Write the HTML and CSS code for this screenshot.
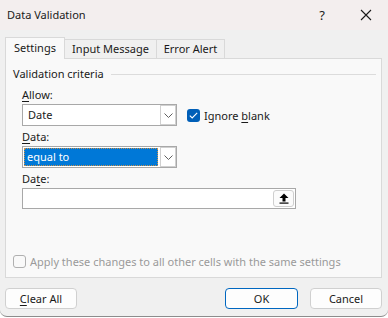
FILE: index.html
```html
<!DOCTYPE html>
<html>
<head>
<meta charset="utf-8">
<link rel="stylesheet" href="styles.css">
</head>
<body>
<div class="window">
  <div class="titlebar">
    <span class="title">Data Validation</span>
    <span class="help">?</span>
    <span class="close"><svg width="12" height="12" viewBox="0 0 12 12"><path d="M1 1L11 11M11 1L1 11" stroke="#1a1a1a" stroke-width="1.1" fill="none"/></svg></span>
  </div>
  <div class="content">
    <div class="tabs">
      <div class="tab active">Settings</div>
      <div class="tab">Input Message</div>
      <div class="tab">Error Alert</div>
    </div>
    <div class="panel">
      <div class="group-head"><span>Validation criteria</span><div class="rule"></div></div>
      <div class="fields">
        <div class="label"><u>A</u>llow:</div>
        <div class="row">
          <div class="select">
            <span class="value">Date</span>
            <span class="drop"><svg width="9" height="5" viewBox="0 0 9 5"><path d="M0.5 0.5L4.5 4.5L8.5 0.5" stroke="#606060" fill="none"/></svg></span>
          </div>
          <label class="check">
            <span class="box on"><svg width="9" height="7" viewBox="0 0 9 7"><path d="M0.8 3.6L3.2 5.9L8.2 0.9" stroke="#fff" stroke-width="1.1" fill="none"/></svg></span>
            <span>Ignore <u>b</u>lank</span>
          </label>
        </div>
        <div class="label"><u>D</u>ata:</div>
        <div class="row">
          <div class="select">
            <span class="value sel">equal to</span>
            <span class="drop"><svg width="9" height="5" viewBox="0 0 9 5"><path d="M0.5 0.5L4.5 4.5L8.5 0.5" stroke="#606060" fill="none"/></svg></span>
          </div>
        </div>
        <div class="label">Da<u>t</u>e:</div>
        <div class="input">
          <span class="pick"><svg width="10" height="11" viewBox="0 0 10 11"><path d="M5 0.5L9.5 5H6.5V8.5H3.5V5H0.5Z" fill="#000"/><rect x="0.5" y="9.5" width="9" height="1.2" fill="#000"/></svg></span>
        </div>
      </div>
      <label class="check apply">
        <span class="box off"></span>
        <span>Apply these changes to all other cells with the same settings</span>
      </label>
    </div>
    <div class="buttons">
      <button class="btn"><u>C</u>lear All</button>
      <span class="spacer"></span>
      <button class="btn primary">OK</button>
      <button class="btn">Cancel</button>
    </div>
  </div>
</div>
</body>
</html>
```

FILE: styles.css
```css
* { box-sizing: border-box; }
html, body { margin: 0; padding: 0; background: #ffffff; }
body {
  font-family: "Noto Sans", "Open Sans", sans-serif;
  font-size: 11px;
  color: #1a1a1a;
}
.window {
  width: 388px;
  height: 317px;
  background: #f0f0f0;
  border-bottom: 1px solid #8c8c8c;
  border-radius: 0 0 7px 7px;
  overflow: hidden;
  display: flex;
  flex-direction: column;
}
.titlebar {
  height: 30px;
  background: #f3eeee;
  display: flex;
  align-items: center;
  padding-left: 7px;
}
.title { flex: 1; font-size: 11px; line-height: 16px; }
.help { width: 14px; font-size: 13px; margin-right: 31px; text-align: center; }
.close { width: 12px; height: 12px; margin-right: 16px; display: flex; }
.content {
  flex: 1;
  padding: 7px 6px 0 5px;
  display: flex;
  flex-direction: column;
}
.tabs {
  display: flex;
  align-items: flex-end;
  height: 21px;
  position: relative;
  z-index: 1;
}
.tab {
  height: 19px;
  border: 1px solid #d9d9d9;
  border-bottom: none;
  background: #f0f0f0;
  line-height: 18px;
  text-align: center;
  margin-left: -1px;
}
.tab:nth-child(1) { width: 60px; margin-left: 0; }
.tab:nth-child(2) { width: 93px; }
.tab:nth-child(3) { width: 69px; }
.tab.active {
  height: 22px;
  margin-bottom: -1px;
  background: #f9f9f9;
  line-height: 20px;
}
.panel {
  height: 220px;
  border: 1px solid #d9d9d9;
  background: #f9f9f9;
  display: flex;
  flex-direction: column;
  padding: 7px 5px 0 7px;
}
.group-head {
  display: flex;
  align-items: center;
  height: 16px;
  line-height: 16px;
}
.rule { flex: 1; height: 1px; background: #dcdcdc; margin-left: 7px; }
.fields {
  padding-left: 9px;
  padding-top: 5px;
  display: flex;
  flex-direction: column;
  flex: 1;
}
.label { line-height: 16px; height: 16px; margin-bottom: 1px; }
.row { display: flex; align-items: center; margin-bottom: 3px; }
.select {
  width: 155px;
  height: 22px;
  border: 1px solid #a8a8a8;
  background: #fff;
  display: flex;
  align-items: center;
  padding: 1px;
}
.value { flex: 1; padding-left: 4px; line-height: 18px; height: 18px; }
.value.sel {
  background: #0078d7;
  color: #fff;
  outline: 1px dotted #c8904a;
  outline-offset: -1px;
  padding-left: 3px;
  margin-right: 2px;
}
.drop {
  width: 16px;
  height: 20px;
  border: 1px solid #d0d0d0;
  background: #fff;
  display: flex;
  align-items: center;
  justify-content: center;
  margin-right: -1px;
}
.check { display: flex; align-items: center; margin-left: 10px; }
.box {
  width: 13px;
  height: 13px;
  border-radius: 3px;
  display: flex;
  align-items: center;
  justify-content: center;
  margin-right: 4px;
}
.box.on { background: #005fb8; }
.box.off { border: 1px solid #b0b0b0; background: #f9f9f9; }
.input {
  width: 274px;
  height: 21px;
  border: 1px solid #a8a8a8;
  background: #fff;
  display: flex;
  justify-content: flex-end;
  align-items: center;
  padding-right: 1px;
}
.pick {
  width: 21px;
  height: 17px;
  border: 1px solid #cfcfcf;
  border-radius: 3px;
  background: #fbfbfb;
  display: flex;
  align-items: center;
  justify-content: center;
}
.apply {
  margin-left: 0;
  margin-bottom: 8px;
  color: #9a9a9a;
}
.buttons {
  display: flex;
  padding-top: 10px;
  gap: 12px;
}
.spacer { flex: 1; }
.btn {
  font-family: inherit;
  font-size: 11px;
  color: #1a1a1a;
  width: 72px;
  height: 21px;
  background: #fdfdfd;
  border: 1px solid #d0d0d0;
  border-radius: 4px;
  padding: 0;
  line-height: 18px;
}
.btn.primary { border-color: #0067c0; width: 73px; }
u { text-decoration: underline; text-underline-offset: 2px; }
```
